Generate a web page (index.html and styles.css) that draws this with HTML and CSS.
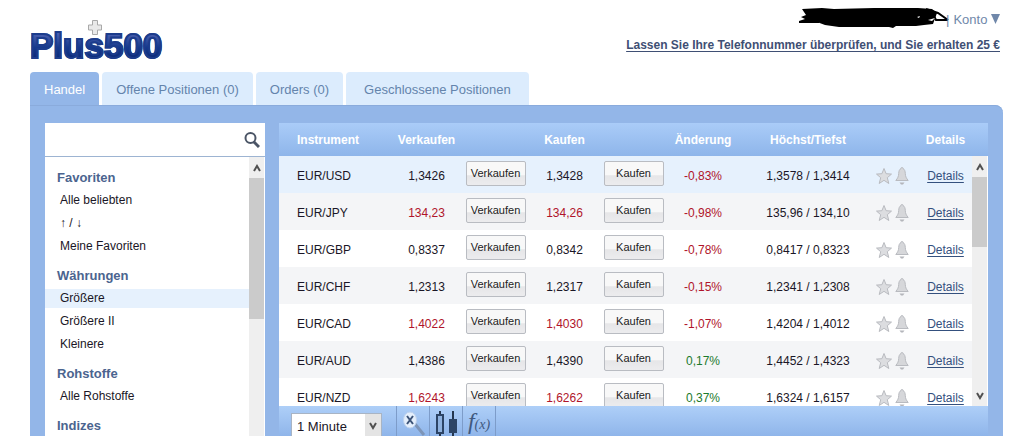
FILE: index.html
```html
<!DOCTYPE html>
<html lang="de">
<head>
  <meta charset="UTF-8">
  <meta name="viewport" content="width=device-width, initial-scale=1">
  <title>Plus500</title>
  <link rel="stylesheet" href="styles.css">
</head>
<body>
  <!-- shared icons -->
  <svg class="sprite" aria-hidden="true">
    <symbol id="star" viewBox="0 0 16 18">
      <path d="M8 1.500l2.100 5.200 5.400.4-4.200 3.600 1.500 5.800L8 13.300l-4.800 3.200 1.500-5.800L.5 7.100l5.400-.4z" fill="#dcdde0" stroke="#b9bbc0"/>
    </symbol>
    <symbol id="bell" viewBox="0 0 14 20">
      <path d="M6 2.500a1 1 0 0 1 2 0c1.600.8 2.200 2.600 2.300 5 .1 3 1 4.700 2.900 7H.8c1.900-2.300 2.800-4 2.900-7 .1-2.400.7-4.200 2.300-5z" fill="#d6d7da" stroke="#b9bbc0"/>
      <path d="M4.500 16.500h5L8 18.500H6z" fill="#b4b6bb"/>
    </symbol>
  </svg>

  <header class="top">
    <h1 class="logo">
      <span class="logo-text">Plus500</span>
      <svg class="logo-plus" viewBox="0 0 14 15" aria-hidden="true">
        <path d="M4.500.5h5v4.500h4v5h-4v4.500h-5V10h-4V5h4z" fill="#e9e9e9" stroke="#a9a9a9"/>
      </svg>
    </h1>
    <div class="account">
      <div class="account-line">
        <svg class="username" viewBox="0 0 152 20" aria-hidden="true">
          <path d="M4 1l20-1 12 1 40-1 44 0 14 1 5 4-4 11-9 1-8 1-20 0-3 2-4-1-50 0-14-2-8-3-18-1 6-2-4-2 5-2z"/>
          <path d="M128 1l12 4 10 7M1 14h20M134 4l4 8 12 0" fill="none" stroke="#000" stroke-width="2"/>
          <path d="M119 9l3-1-1 2zM130 12l7-2-3 3z" fill="#fff"/>
        </svg>
        <span class="sep">|</span>
        <a class="konto" href="#">Konto
          <svg class="caret" viewBox="0 0 9 10" aria-hidden="true"><path d="M0 0h9L4.500 10z"/></svg>
        </a>
      </div>
      <a class="promo" href="#">Lassen Sie Ihre Telefonnummer überprüfen, und Sie erhalten 25 €</a>
    </div>
  </header>

  <nav class="tabs">
    <a class="tab active" href="#">Handel</a>
    <a class="tab" href="#">Offene Positionen (0)</a>
    <a class="tab" href="#">Orders (0)</a>
    <a class="tab wide" href="#">Geschlossene Positionen</a>
  </nav>

  <main class="panel">
    <aside class="sidebar">
      <form class="search">
        <input type="text" aria-label="Suche">
        <button type="button" aria-label="Suchen">
          <svg viewBox="0 0 16 16" aria-hidden="true">
            <circle cx="6.500" cy="6" r="5" fill="none" stroke="#4b5566" stroke-width="2"/>
            <path d="M9.500 9.500l5.500 5.500" stroke="#4b5566" stroke-width="3"/>
          </svg>
        </button>
      </form>
      <div class="side-body">
        <div class="side-list">
          <h2>Favoriten</h2>
          <ul>
            <li><a href="#">Alle beliebten</a></li>
            <li><a href="#">↑ / ↓</a></li>
            <li><a href="#">Meine Favoriten</a></li>
          </ul>
          <h2>Währungen</h2>
          <ul>
            <li class="selected"><a href="#">Größere</a></li>
            <li><a href="#">Größere II</a></li>
            <li><a href="#">Kleinere</a></li>
          </ul>
          <h2>Rohstoffe</h2>
          <ul>
            <li><a href="#">Alle Rohstoffe</a></li>
          </ul>
          <h2>Indizes</h2>
        </div>
        <div class="scrollbar side-scroll">
          <svg class="arrow" viewBox="0 0 8 8" aria-hidden="true"><path d="M1 7l3-5 3 5"/></svg>
          <div class="thumb"></div>
        </div>
      </div>
    </aside>

    <section class="content">
      <div class="board">
        <table class="rates">
          <colgroup>
            <col class="c-name"><col class="c-price"><col class="c-btn"><col class="c-price"><col class="c-btn">
            <col class="c-change"><col class="c-range"><col class="c-icons"><col class="c-details">
          </colgroup>
          <thead>
            <tr>
              <th class="name">Instrument</th><th>Verkaufen</th><th></th><th>Kaufen</th><th></th>
              <th>Änderung</th><th>Höchst/Tiefst</th><th></th><th class="details">Details</th>
            </tr>
          </thead>
          <tbody id="rows"></tbody>
        </table>
        <div class="scrollbar board-scroll">
          <svg class="arrow" viewBox="0 0 8 8" aria-hidden="true"><path d="M1 7l3-5 3 5"/></svg>
          <div class="thumb"></div>
          <svg class="arrow down" viewBox="0 0 8 8" aria-hidden="true"><path d="M1 1l3 5 3-5"/></svg>
        </div>
      </div>

      <div class="chart-bar">
        <div class="interval">
          <select aria-label="Intervall">
            <option>1 Minute</option>
            <option>5 Minuten</option>
            <option>1 Stunde</option>
          </select>
          <svg class="arrow" viewBox="0 0 8 8" aria-hidden="true"><path d="M1 1l3 5 3-5"/></svg>
        </div>
        <div class="tools">
          <button type="button" aria-label="Zoom zurücksetzen">
            <svg viewBox="0 0 32 30" aria-hidden="true">
              <path d="M18 18l9 11" stroke="#7d95b8" stroke-width="3"/>
              <ellipse cx="13" cy="14" rx="6.500" ry="8" fill="#e4effc" stroke="#bdd2ee"/>
              <path d="M10 10l6 8M16 10l-6 8" stroke="#3c5478" stroke-width="2"/>
            </svg>
          </button>
          <button type="button" aria-label="Kerzen">
            <svg viewBox="0 0 32 30" aria-hidden="true">
              <path d="M10 5v4M10 27v3M23 5v25" stroke="#24364f" stroke-width="2"/>
              <rect x="7" y="9" width="6" height="18" fill="#8fb2df" stroke="#2c4466" stroke-width="2"/>
              <rect x="19" y="13" width="8" height="14" fill="#2c4466"/>
            </svg>
          </button>
          <button type="button" class="fx" aria-label="Indikatoren"><span class="f">f</span>(x)</button>
          <span class="tools-end"></span>
        </div>
      </div>
    </section>
  </main>

  <script>
    // name, sell, buy, change, high, low, price colour
    const rates = [
      ["EUR/USD", "1,3426", "1,3428", "-0,83%", "1,3578", "1,3414", ""],
      ["EUR/JPY", "134,23", "134,26", "-0,98%", "135,96", "134,10", "red"],
      ["EUR/GBP", "0,8337", "0,8342", "-0,78%", "0,8417", "0,8323", ""],
      ["EUR/CHF", "1,2313", "1,2317", "-0,15%", "1,2341", "1,2308", ""],
      ["EUR/CAD", "1,4022", "1,4030", "-1,07%", "1,4204", "1,4012", "red"],
      ["EUR/AUD", "1,4386", "1,4390", "0,17%", "1,4452", "1,4323", ""],
      ["EUR/NZD", "1,6243", "1,6262", "0,37%", "1,6324", "1,6157", "red"]
    ];

    document.getElementById("rows").innerHTML = rates.map(([name, sell, buy, change, high, low, color]) =>
      "<tr>" +
        "<td class='name'>" + name + "</td>" +
        "<td class='" + color + "'>" + sell + "</td>" +
        "<td><button type='button' class='trade'>Verkaufen</button></td>" +
        "<td class='" + color + "'>" + buy + "</td>" +
        "<td><button type='button' class='trade'>Kaufen</button></td>" +
        "<td class='" + (change[0] === "-" ? "red" : "green") + "'>" + change + "</td>" +
        "<td>" + high + " / " + low + "</td>" +
        "<td><div class='icons'><svg class='star'><use href='#star'/></svg><svg class='bell'><use href='#bell'/></svg></div></td>" +
        "<td class='details'><a href='#'>Details</a></td>" +
      "</tr>"
    ).join("");
  </script>
</body>
</html>
```
FILE: styles.css
```css
* {
  box-sizing: border-box;
}
body {
  margin: 0;
  padding: 0 11px 0 30px;
  height: 100vh;
  overflow: hidden;
  display: flex;
  flex-direction: column;
  background: #fff;
  color: #1a1626;
  font-family: "Liberation Sans", Arial, sans-serif;
  font-size: 12px;
}
button, input, select {
  font-family: inherit;
}
.sprite {
  position: absolute;
  width: 0;
  height: 0;
}

/* header */
.top {
  display: flex;
  justify-content: space-between;
  height: 72px;
  flex-shrink: 0;
}
.logo {
  position: relative;
  margin: 0;
  padding-top: 24px;
  font-size: 35px;
  line-height: 44px;
}
.logo-text {
  background: linear-gradient(#4a5fae 20%, #16398c 55%, #0c2a78 85%);
  background-clip: text;
  -webkit-background-clip: text;
  color: transparent;
  -webkit-text-stroke: 2px #1c3c8c;
}
.logo-plus {
  position: absolute;
  left: 58px;
  top: 20px;
  width: 14px;
  height: 15px;
}
.account {
  padding: 8px 3px 0 0;
  text-align: right;
}
.account-line {
  display: flex;
  justify-content: flex-end;
  height: 24px;
  line-height: 24px;
  color: #7088aa;
  font-size: 13px;
}
.username {
  width: 152px;
  height: 20px;
}
.sep {
  margin-left: -4px;
  margin-right: 4px;
}
.konto {
  color: #7088aa;
  text-decoration: none;
}
.caret {
  width: 9px;
  height: 10px;
  fill: #7088aa;
}
.promo {
  color: #3f4f74;
  font-weight: bold;
  line-height: 26px;
  text-underline-offset: 2px;
}

/* tabs */
.tabs {
  display: flex;
  gap: 3px;
  flex-shrink: 0;
}
.tab {
  padding: 0 14px;
  height: 33px;
  line-height: 35px;
  border-radius: 4px 4px 0 0;
  background: #dcecfd;
  color: #6484ac;
  font-size: 13px;
  text-decoration: none;
}
.tab.wide {
  padding: 0 18px;
}
.tab.active {
  background: #93b6e8;
  color: #fff;
}

.panel {
  flex: 1;
  min-height: 0;
  display: flex;
  gap: 14px;
  padding: 18px 15px 0;
  background: #93b6e8;
  box-shadow: inset 0 1px #8aabdc;
  border-radius: 0 8px 0 0;
}

/* sidebar */
.sidebar {
  width: 220px;
  flex-shrink: 0;
  display: flex;
  flex-direction: column;
  background: #fff;
}
.search {
  display: flex;
  height: 34px;
  flex-shrink: 0;
  border-bottom: 1px solid #9db4d2;
}
.search input {
  flex: 1;
  min-width: 0;
  border: 0;
  padding: 0 8px;
  font-size: 13px;
}
.search button {
  width: 26px;
  padding: 0 5px;
  border: 0;
  background: none;
}
.search svg {
  display: block;
  width: 16px;
  height: 16px;
}
.side-body {
  flex: 1;
  min-height: 0;
  display: flex;
}
.side-list {
  flex: 1;
  padding-top: 9px;
  overflow: hidden;
}
.side-list h2 {
  margin: 0;
  padding-left: 12px;
  color: #4b648f;
  font-size: 13px;
  line-height: 23px;
}
.side-list ul {
  margin: 0 0 8px;
  padding: 0;
  list-style: none;
}
.side-list li {
  margin: 2px 0 4px;
  padding-left: 15px;
  line-height: 19px;
}
.side-list a {
  color: #1a1626;
  text-decoration: none;
}
.side-list .selected {
  background: #e6f1fd;
}

/* drawn scrollbars */
.scrollbar {
  width: 16px;
  flex-shrink: 0;
  background: #efefef;
  border-right: 1px solid #fff;
}
.scrollbar .thumb {
  background: #cbcbcb;
}
.arrow {
  display: block;
  width: 8px;
  height: 8px;
  margin: 7px auto 6px;
}
.arrow path {
  fill: none;
  stroke: #505050;
  stroke-width: 2;
}
.side-scroll .thumb {
  height: 141px;
}
.board-scroll {
  display: flex;
  flex-direction: column;
  margin-top: 33px;
}
.board-scroll .thumb {
  height: 70px;
}
.board-scroll .down {
  margin-top: auto;
}

/* rates table */
.content {
  flex: 1;
  min-width: 0;
  display: flex;
  flex-direction: column;
}
.board {
  display: flex;
  align-items: stretch;
  height: 283px;
  flex-shrink: 0;
  overflow: hidden;
  background: linear-gradient(#aaccf8, #8eb5ea) top / 100% 33px no-repeat #fff;
}
.rates {
  flex: 1;
  align-self: flex-start;
  table-layout: fixed;
  border-collapse: collapse;
}
.c-name { width: 110px; }
.c-price { width: 75px; }
.c-btn { width: 63px; }
.c-change { width: 76px; }
.c-range { width: 134px; }
.c-icons { width: 34px; }
.c-details { width: 63px; }
.rates th {
  height: 33px;
  padding: 0;
  color: #fff;
}
.rates td {
  height: 37px;
  padding: 2px 0 0;
  text-align: center;
}
.rates .name {
  padding-left: 18px;
  text-align: left;
}
.rates .details {
  padding-left: 10px;
}
.rates tbody tr:nth-child(even) {
  background: #f4f5f7;
}
.rates tbody tr:first-child {
  background: #e6f1fd;
}
.rates a {
  color: #34507e;
  text-underline-offset: 2px;
}
.rates .red {
  color: #b0142a;
}
.rates .green {
  color: #1c7a2c;
}
.trade {
  display: block;
  width: 60px;
  height: 25px;
  margin: 0 auto 5px;
  padding: 0;
  border: 1px solid #b9bcc2;
  border-radius: 2px;
  background: linear-gradient(#f8f8f8 55%, #e6e6e8 60%, #ececee);
  color: #222;
  font-size: 11px;
}
.icons {
  display: flex;
  justify-content: center;
  align-items: center;
  gap: 3px;
}
.star {
  width: 16px;
  height: 18px;
}
.bell {
  width: 14px;
  height: 20px;
}

/* chart toolbar */
.chart-bar {
  flex: 1;
  display: flex;
  padding-left: 12px;
  background: linear-gradient(#aecff8, #8fb5ea 30px);
}
.interval {
  position: relative;
  margin: 7px 14px 0 0;
}
.interval select {
  width: 91px;
  height: 26px;
  padding: 0 17px 0 5px;
  border: 1px solid #a8b4c4;
  border-radius: 0;
  appearance: none;
  background: linear-gradient(#e4e4e4, #e4e4e4) right / 16px 100% no-repeat #fff;
  color: #1a1626;
  font-size: 13px;
}
/* chevron over the drop-down's grey end */
.interval .arrow {
  position: absolute;
  top: 9px;
  right: 5px;
  margin: 0;
  pointer-events: none;
}
.tools {
  display: flex;
}
.tools button {
  width: 33px;
  height: 30px;
  padding: 0;
  border: 0;
  border-left: 1px solid #7d9cc9;
  background: none;
}
.tools svg {
  display: block;
  width: 32px;
  height: 30px;
}
.tools .fx {
  color: #41597f;
  font: italic 14px "Liberation Serif", serif;
}
.fx .f {
  font-size: 24px;
}
.tools-end {
  border-left: 1px solid #7d9cc9;
}
```
